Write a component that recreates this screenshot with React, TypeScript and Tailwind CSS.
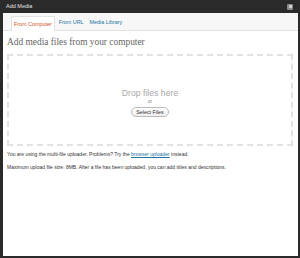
export default function App() {
	const tabs = ["From Computer", "From URL", "Media Library"];

	return (
		<div
			className="w-[300px] h-[258px] bg-[#2a2a2a] flex flex-col"
			style={{ fontFamily: '"Liberation Sans", Arial, sans-serif' }}
		>
			<div className="h-[13px] flex items-center justify-between pl-[6px] pr-[7px]">
				<span className="text-[5.5px] leading-none text-[#e5e5e5]">Add Media</span>
				<span className="w-[6px] h-[6px] bg-[#8a8a8a] rounded-[1px] flex items-center justify-center">
					<span className="w-[3px] h-[3px] bg-[#cfcfcf]" />
				</span>
			</div>

			<div className="flex-1 ml-[3px] mr-[2px] mb-[2px] bg-white flex flex-col">
				<div className="h-[18px] bg-[#f7f7f7] border-b border-[#e3e3e3] flex items-end pl-[8px] gap-[2px]">
					{tabs.map((tab, i) =>
						i === 0 ? (
							<div
								key={tab}
								className="h-[15px] -mb-px bg-white border border-b-0 border-[#e3e3e3] px-[2px] flex items-center text-[5.4px] text-[#d54e21]"
							>
								{tab}
							</div>
						) : (
							<div
								key={tab}
								className="h-[15px] px-[2px] flex items-center text-[5.4px] text-[#21759b]"
							>
								{tab}
							</div>
						),
					)}
				</div>

				<div className="pl-[4px] pr-[5px] pt-[5px] flex flex-col">
					<h2
						className="text-[9.4px] leading-[13px] text-[#666]"
						style={{ fontFamily: '"Liberation Serif", Georgia, serif' }}
					>
						Add media files from your computer
					</h2>

					<div className="mt-[5px] h-[92px] border-2 border-dashed border-[#e2e2e2] flex flex-col items-center justify-center">
						<p className="text-[8.7px] leading-none text-[#a8a8a8] mt-[6px]">Drop files here</p>
						<p className="text-[5px] leading-none text-[#888] mt-[2px]">or</p>
						<button className="mt-[3px] h-[10px] px-[4px] rounded-full border border-[#bbb] bg-gradient-to-b from-white to-[#eee] text-[5.3px] leading-none text-[#333]">
							Select Files
						</button>
					</div>

					<p className="mt-[5px] text-[5px] leading-[7px] text-[#333]">
						You are using the multi-file uploader. Problems? Try the{" "}
						<span className="text-[#21759b] underline">browser uploader</span> instead.
					</p>
					<p className="mt-[6px] text-[5px] leading-[7px] text-[#333]">
						Maximum upload file size: 8MB. After a file has been uploaded, you can add titles and
						descriptions.
					</p>
				</div>
			</div>
		</div>
	);
}
